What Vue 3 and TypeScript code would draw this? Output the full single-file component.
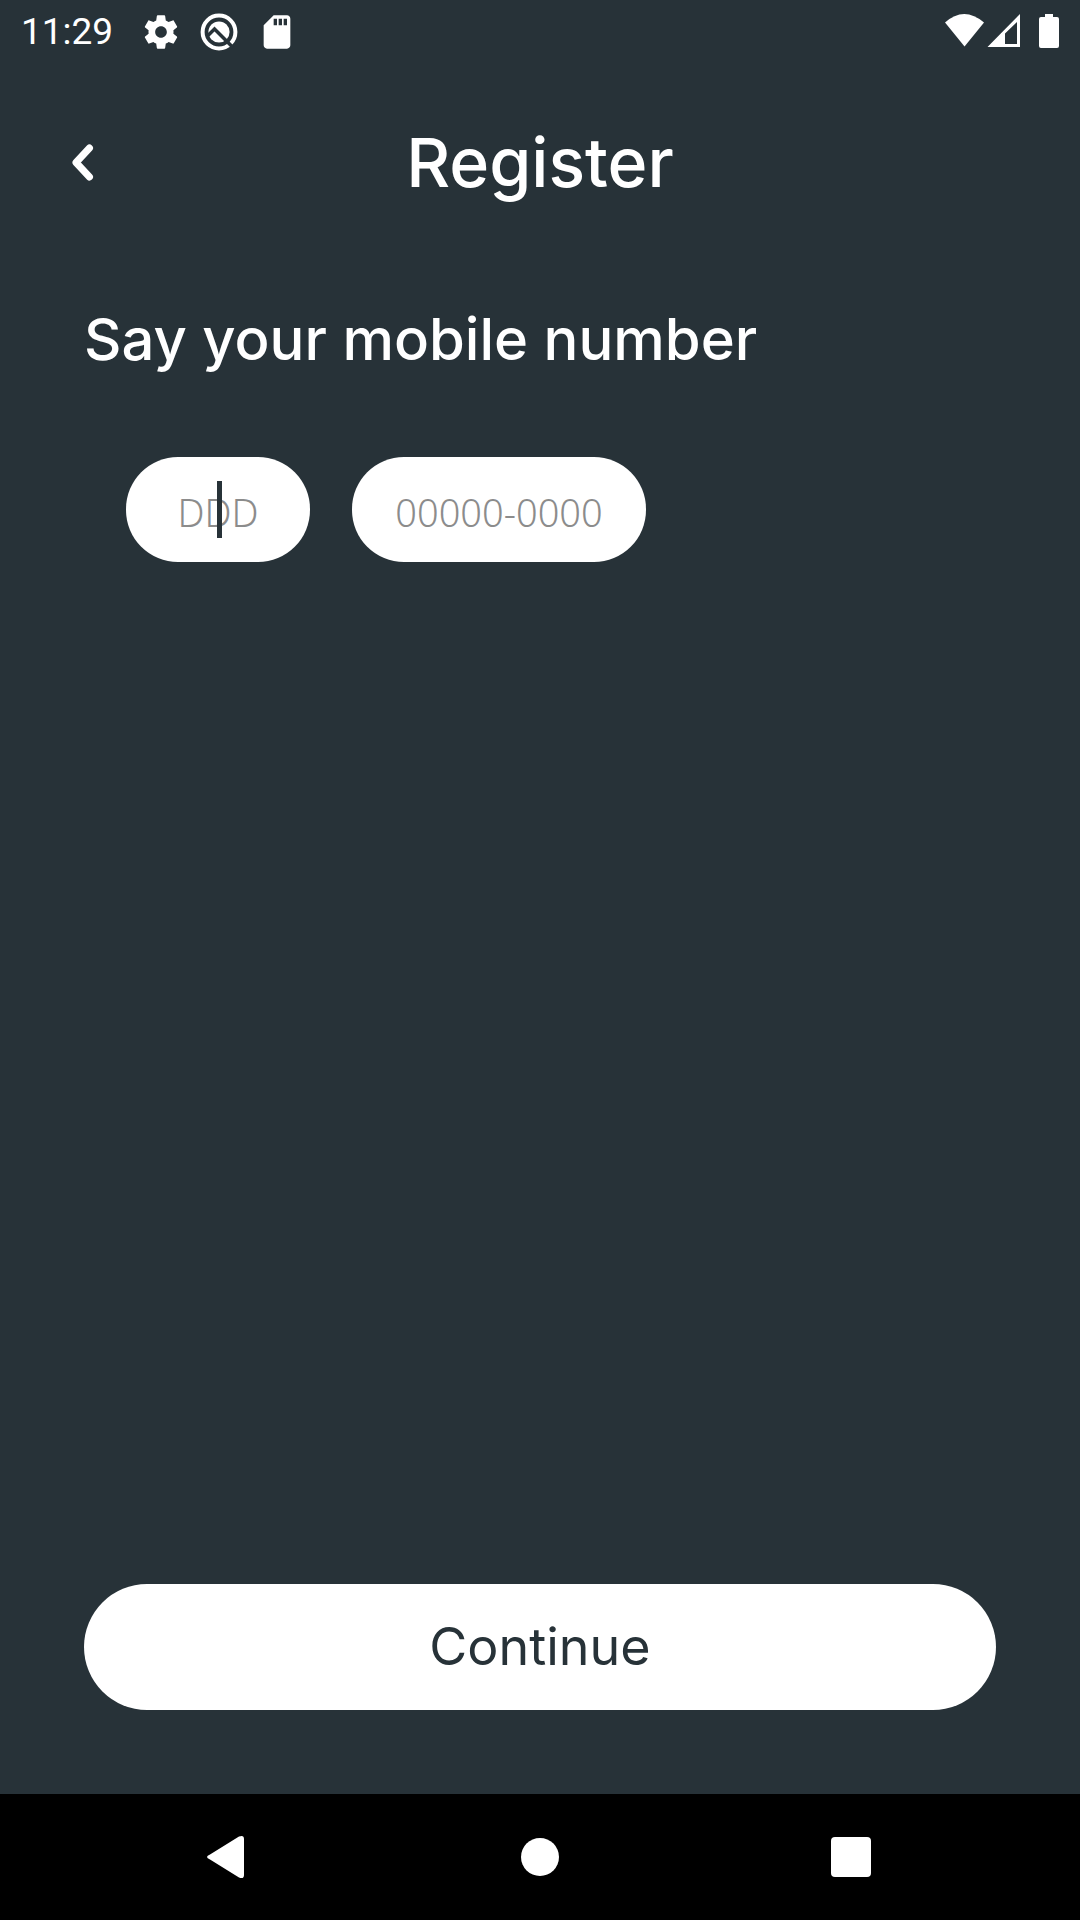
<script setup lang="ts">
import { ref } from 'vue'

const areaCode = ref('')
const phone = ref('')
</script>

<template>
  <div class="screen">
    <div class="status">
      <span class="time">11:29</span>
      <svg class="icon" viewBox="0 0 24 24" aria-hidden="true">
        <path d="M19.43 12.98c.04-.32.07-.64.07-.98s-.03-.66-.07-.98l2.11-1.65c.19-.15.24-.42.12-.64l-2-3.46c-.12-.22-.39-.3-.61-.22l-2.49 1c-.52-.4-1.08-.73-1.69-.98l-.38-2.65C14.46 2.18 14.25 2 14 2h-4c-.25 0-.46.18-.49.42l-.38 2.65c-.61.25-1.17.59-1.69.98l-2.49-1c-.23-.09-.49 0-.61.22l-2 3.46c-.13.22-.07.49.12.64l2.11 1.65c-.04.32-.07.65-.07.98s.03.66.07.98l-2.11 1.65c-.19.15-.24.42-.12.64l2 3.46c.12.22.39.3.61.22l2.49-1c.52.4 1.08.73 1.69.98l.38 2.65c.03.24.24.42.49.42h4c.25 0 .46-.18.49-.42l.38-2.65c.61-.25 1.17-.59 1.69-.98l2.49 1c.23.09.49 0 .61-.22l2-3.46c.12-.22.07-.49-.12-.64l-2.11-1.65zM12 15.5c-1.93 0-3.5-1.57-3.5-3.5s1.57-3.5 3.5-3.5 3.5 1.57 3.5 3.5-1.57 3.5-3.5 3.5z" />
      </svg>
      <svg class="icon" viewBox="0 0 40 40" aria-hidden="true">
        <circle class="ring" cx="20" cy="20" r="16.4" />
        <circle cx="20" cy="20" r="10.6" />
        <path class="cut" d="M9 23.500L15.500 17L34 35.500" />
      </svg>
      <svg class="icon" viewBox="0 0 24 24" aria-hidden="true">
        <path d="M18 2h-8L4 8v12c0 1.100.9 2 2 2h12c1.100 0 2-.9 2-2V4c0-1.100-.9-2-2-2zm-6 6h-2V4h2v4zm3 0h-2V4h2v4zm3 0h-2V4h2v4z" />
      </svg>
      <svg class="signals" viewBox="0 0 116 36" aria-hidden="true">
        <path d="M0 8.500Q19-8.500 39 8.500L19.500 32.500z" />
        <path fill-rule="evenodd" d="M42.500 33L75 0V33zM60 19.500V30H72V8z" />
        <path d="M100 0h8v3h4q2 0 2 2v27q0 2-2 2H96q-2 0-2-2V5q0-2 2-2h4z" />
      </svg>
    </div>

    <header class="header">
      <button class="back" type="button" aria-label="Back">
        <svg viewBox="0 0 24 40" aria-hidden="true"><path d="M19.500 6L6 20.500L19.500 35" /></svg>
      </button>
      <h1>Register</h1>
    </header>

    <main class="content">
      <h2>Say your mobile number</h2>
      <div class="fields">
        <div class="field area">
          <input v-model="areaCode" type="tel" aria-label="Area code" placeholder="DDD" />
          <span class="caret"></span>
        </div>
        <div class="field number">
          <input v-model="phone" type="tel" aria-label="Mobile number" placeholder="00000-0000" />
        </div>
      </div>
      <button class="continue" type="button">Continue</button>
    </main>

    <nav class="nav">
      <button type="button" aria-label="System back">
        <svg viewBox="0 0 48 48"><path d="M5 21.500L34 3.500Q39 1.500 39 6V42Q39 46.500 34 44.500L5 26.500Q-1 24 5 21.500z" /></svg>
      </button>
      <button type="button" aria-label="Home">
        <svg viewBox="0 0 48 48"><circle cx="24" cy="24" r="19" /></svg>
      </button>
      <button type="button" aria-label="Recent apps">
        <svg viewBox="0 0 48 48"><rect x="4" y="4" width="40" height="40" rx="4" /></svg>
      </button>
    </nav>
  </div>
</template>

<style>
body {
  margin: 0;
  background: #273238;
}
</style>

<style scoped>
.screen {
  min-height: 100vh;
  display: flex;
  flex-direction: column;
  background: #273238;
  color: #fff;
  font-family: Inter, 'Liberation Sans', sans-serif;
}

button {
  border: 0;
  padding: 0;
  background: none;
  font-family: inherit;
  cursor: pointer;
}

svg {
  display: block;
  fill: #fff;
}

.status {
  height: 63px;
  display: flex;
  align-items: center;
  gap: 18px;
  padding: 0 19px 0 21px;
}

.time {
  margin-right: 10px;
  font-family: Roboto, sans-serif;
  font-size: 37px;
  line-height: 40px;
}

.icon {
  width: 40px;
  height: 40px;
}

.ring {
  fill: none;
  stroke: #fff;
  stroke-width: 4;
}

.cut {
  fill: none;
  stroke: #273238;
  stroke-width: 3.5;
}

.signals {
  width: 116px;
  height: 36px;
  margin-left: auto;
}

.header {
  display: grid;
  grid-template-columns: 84px 1fr 84px;
  align-items: center;
  height: 198px;
  padding: 0 40px;
}

.back {
  display: flex;
  justify-content: center;
  padding: 20px 0;
}

.back svg {
  width: 24px;
  height: 40px;
}

.back path {
  fill: none;
  stroke: #fff;
  stroke-width: 7;
  stroke-linecap: round;
  stroke-linejoin: round;
}

h1,
h2 {
  margin: 0;
  font-weight: 500;
  line-height: 80px;
}

h1 {
  font-size: 68px;
  text-align: center;
}

h2 {
  font-size: 58px;
}

.content {
  flex: 1;
  display: flex;
  flex-direction: column;
  padding: 38px 84px 84px;
}

.fields {
  display: flex;
  gap: 42px;
  margin: 78px 42px;
}

.field {
  position: relative;
}

.area {
  width: 184px;
}

.number {
  width: 294px;
}

.field input {
  display: block;
  box-sizing: border-box;
  width: 100%;
  height: 105px;
  border: 0;
  border-radius: 52px;
  padding: 4px 0 0;
  background: #fff;
  color: #273238;
  font-family: 'Noto Sans', 'Open Sans', sans-serif;
  font-size: 38px;
  font-weight: 300;
  text-align: center;
}

.field input::placeholder {
  color: #8c8c8c;
  opacity: 1;
}

.caret {
  position: absolute;
  top: 24px;
  left: 91px;
  width: 5px;
  height: 57px;
  background: #273238;
  pointer-events: none;
}

.continue {
  height: 126px;
  margin-top: auto;
  padding-bottom: 2px;
  border-radius: 63px;
  background: #fff;
  color: #273238;
  font-size: 52px;
}

.nav {
  height: 126px;
  display: flex;
  padding: 0 74px;
  background: #000;
}

.nav button {
  flex: 1;
  display: flex;
  align-items: center;
  justify-content: center;
}

.nav svg {
  width: 48px;
  height: 48px;
}
</style>
